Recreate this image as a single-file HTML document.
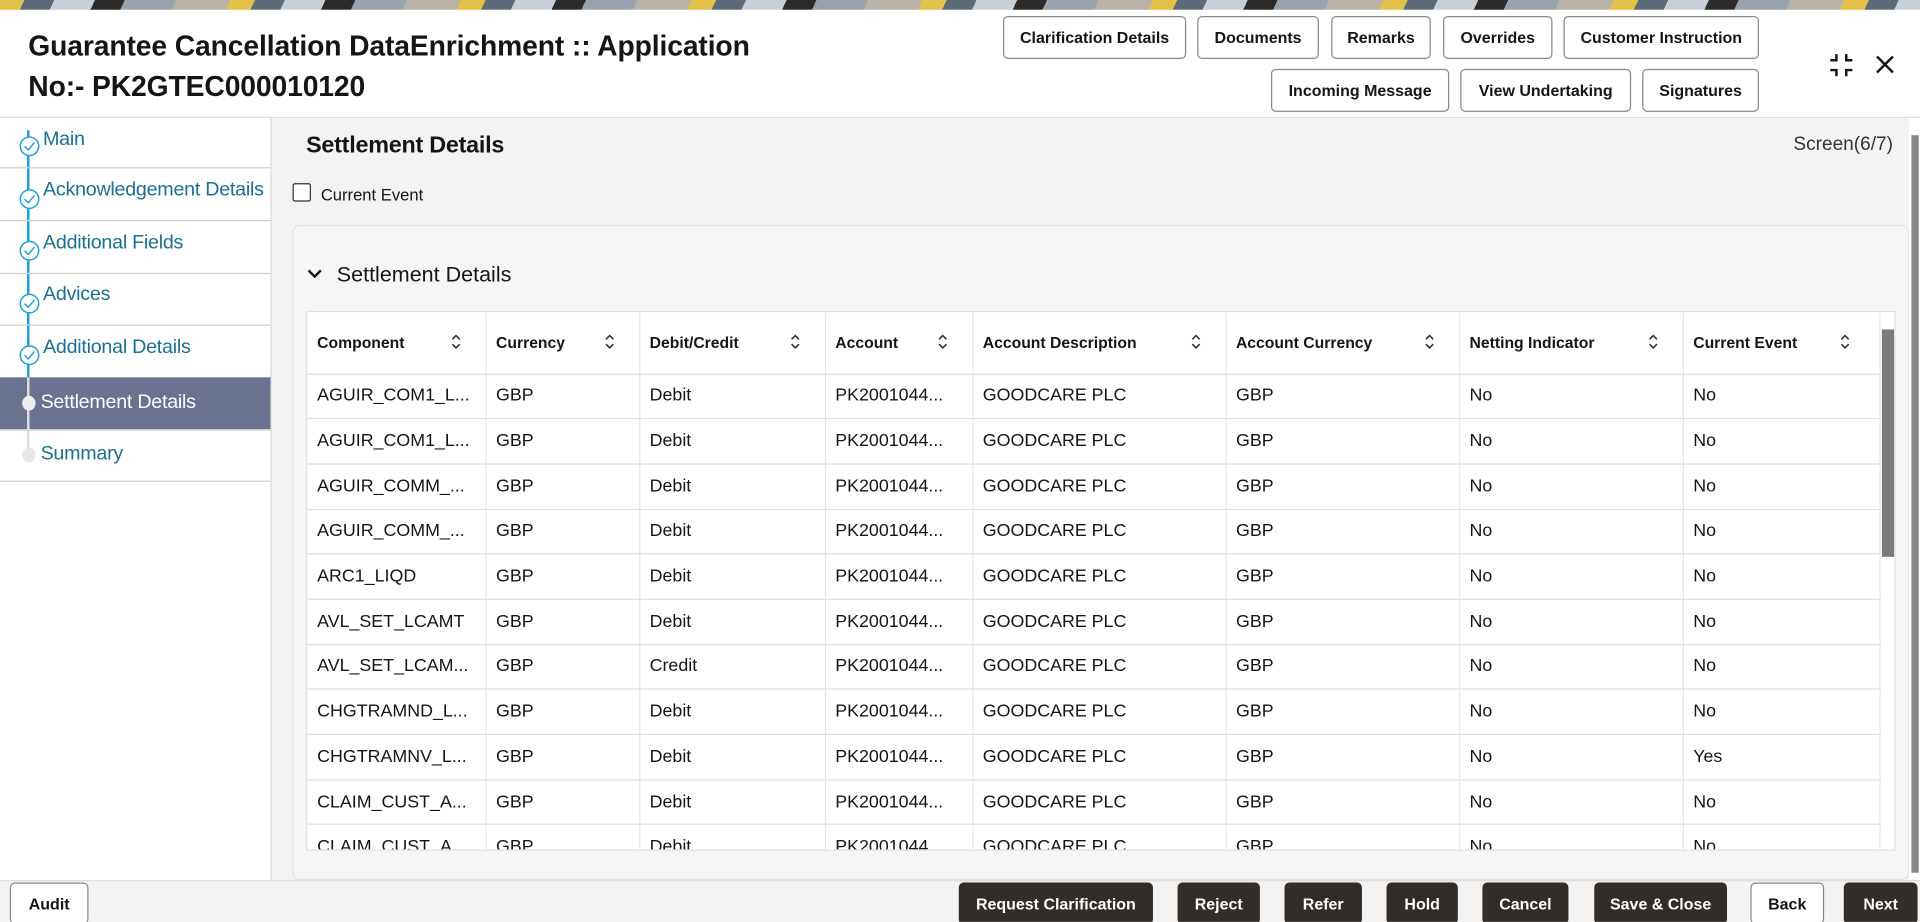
<!DOCTYPE html>
<html><head><meta charset="utf-8"><style>
*{box-sizing:border-box;margin:0;padding:0}
html,body{width:1920px;height:922px;overflow:hidden;background:#fff;font-family:"Liberation Sans",sans-serif;color:#161513}
#w{position:absolute;left:0;top:0;width:1562px;height:750.1px;transform:scale(1.22919);transform-origin:0 0;overflow:hidden}
.a{position:absolute}
.banner{left:0;top:0;width:1562px;height:8px;background:repeating-linear-gradient(115deg,#e2c14a 0 18px,#5d6a78 18px 40px,#c9cfd6 40px 70px,#2d2b2a 70px 92px,#9aa3ad 92px 130px,#b9b2a6 130px 170px)}
.title{left:23px;top:21px;font-size:23px;font-weight:bold;line-height:33px;color:#161513;letter-spacing:-0.1px}
.btn{position:absolute;height:35px;border:1px solid #8a8885;border-radius:4px;background:#fff;font-size:13px;font-weight:bold;display:flex;align-items:center;justify-content:center;color:#161513}
.dk{position:absolute;top:718px;height:34px;background:#312d2a;color:#fff;border-radius:4px;font-size:13px;font-weight:bold;display:flex;align-items:center;justify-content:center}
.side{left:0;top:96px;width:221px;height:620px;background:#fff;border-right:1px solid #d5d3d0}
.it{position:absolute;left:0;width:220px;height:43px;border-bottom:1px solid #cfcdc9;font-size:16px;color:#1a6f94;padding-left:35px;line-height:36px;letter-spacing:-0.2px}
.main{left:221px;top:96px;width:1332px;height:620px;background:#f4f3f1}
table{border-collapse:collapse;font-size:14.5px;width:1279px;table-layout:fixed;background:#fff}
td,th{height:36.7px;border-bottom:1px solid #e1dfdc;border-right:1px solid #e8e6e3;padding-left:8px;white-space:nowrap;overflow:hidden;text-align:left}
th{height:50px;font-size:12.8px;font-weight:bold;position:relative}
th svg{position:absolute;right:20px;top:17px}
</style></head><body><div id="w">
<div class="a banner"></div>
<div class="a" style="left:0;top:8px;width:1562px;height:88px;background:#fff;border-bottom:1px solid #dedcd9"></div>
<div class="a title">Guarantee Cancellation DataEnrichment :: Application<br>No:- PK2GTEC000010120</div>
<div class="btn" style="left:816px;top:13px;width:149px">Clarification Details</div>
<div class="btn" style="left:974px;top:13px;width:99px">Documents</div>
<div class="btn" style="left:1083px;top:13px;width:81px">Remarks</div>
<div class="btn" style="left:1174px;top:13px;width:89px">Overrides</div>
<div class="btn" style="left:1272px;top:13px;width:159px">Customer Instruction</div>
<div class="btn" style="left:1034px;top:56px;width:145px">Incoming Message</div>
<div class="btn" style="left:1188px;top:56px;width:139px">View Undertaking</div>
<div class="btn" style="left:1336px;top:56px;width:95px">Signatures</div>
<svg class="a" style="left:1487px;top:42px" width="22" height="22" viewBox="0 0 22 22" fill="none" stroke="#161513" stroke-width="2"><path d="M7 2v5H2M15 2v5h5M7 20v-5H2M15 20v-5h5"/></svg>
<svg class="a" style="left:1526px;top:45px" width="15" height="15" viewBox="0 0 15 15" stroke="#161513" stroke-width="2"><path d="M1 1l13 13M14 1L1 14"/></svg>

<div class="a side">
<div class="a" style="left:22px;top:10px;width:2px;height:257px;background:#1aa0d8"></div>
<div class="it" style="top:0;height:41px;line-height:36px">Main</div>
<div class="it" style="top:41px">Acknowledgement Details</div>
<div class="it" style="top:84px">Additional Fields</div>
<div class="it" style="top:126px">Advices</div>
<div class="it" style="top:169px">Additional Details</div>
<div class="it" style="top:211px;background:#6a7191;color:#fff;padding-left:33px;line-height:42px">Settlement Details</div>
<div class="it" style="top:253px;padding-left:33px;line-height:42px">Summary</div>
<div class="a" style="left:22px;top:211px;width:2px;height:43px;background:#ddd"></div>
<div class="a" style="left:22px;top:254px;width:2px;height:20px;background:#ddd"></div>
<div class="a" style="left:18px;top:226px;width:11px;height:12px;border-radius:50%;background:#eee"></div>
<div class="a" style="left:18px;top:268px;width:11px;height:12px;border-radius:50%;background:#e6e6e6"></div>
<svg class="a" style="left:15px;top:14px" width="18" height="190" fill="none" stroke="#1aa0d8" stroke-width="1.2">
<g><circle cx="9" cy="9" r="7.5" fill="#fff"/><path d="M5 9l3 3 5-6"/></g>
<g transform="translate(0,43)"><circle cx="9" cy="9" r="7.5" fill="#fff"/><path d="M5 9l3 3 5-6"/></g>
<g transform="translate(0,85)"><circle cx="9" cy="9" r="7.5" fill="#fff"/><path d="M5 9l3 3 5-6"/></g>
<g transform="translate(0,128)"><circle cx="9" cy="9" r="7.5" fill="#fff"/><path d="M5 9l3 3 5-6"/></g>
<g transform="translate(0,170)"><circle cx="9" cy="9" r="7.5" fill="#fff"/><path d="M5 9l3 3 5-6"/></g>
</svg>
</div>

<div class="a main"></div>
<div class="a" style="left:249px;top:108px;font-size:19px;font-weight:bold;letter-spacing:-0.2px">Settlement Details</div>
<div class="a" style="left:1459px;top:109px;font-size:15.5px;color:#333">Screen(6/7)</div>
<div class="a" style="left:238px;top:149px;width:15px;height:15px;border:1.5px solid #333;border-radius:2px;background:#fff"></div>
<div class="a" style="left:261px;top:151px;font-size:13.5px">Current Event</div>
<div class="a" style="left:238px;top:183px;width:1315px;height:533px;background:#f7f6f4;border:1px solid #e6e4e1;border-radius:6px"></div>
<svg class="a" style="left:250px;top:218px" width="12" height="10" fill="none" stroke="#161513" stroke-width="2"><path d="M1 2l5 5 5-5"/></svg>
<div class="a" style="left:274px;top:213px;font-size:17.5px">Settlement Details</div>

<div class="a" style="left:249px;top:253px;width:1293px;height:439px;overflow:hidden;background:#fff;border:1px solid #e1dfdc">
<table>
<colgroup><col style="width:145px"><col style="width:125px"><col style="width:151px"><col style="width:120px"><col style="width:206px"><col style="width:190px"><col style="width:182px"><col style="width:160px"></colgroup>
<tr><th>Component<svg width="8" height="14" fill="none" stroke="#333" stroke-width="1.3"><path d="M1 5l3-3 3 3M1 9l3 3 3-3"/></svg></th><th>Currency<svg width="8" height="14" fill="none" stroke="#333" stroke-width="1.3"><path d="M1 5l3-3 3 3M1 9l3 3 3-3"/></svg></th><th>Debit/Credit<svg width="8" height="14" fill="none" stroke="#333" stroke-width="1.3"><path d="M1 5l3-3 3 3M1 9l3 3 3-3"/></svg></th><th>Account<svg width="8" height="14" fill="none" stroke="#333" stroke-width="1.3"><path d="M1 5l3-3 3 3M1 9l3 3 3-3"/></svg></th><th>Account Description<svg width="8" height="14" fill="none" stroke="#333" stroke-width="1.3"><path d="M1 5l3-3 3 3M1 9l3 3 3-3"/></svg></th><th>Account Currency<svg width="8" height="14" fill="none" stroke="#333" stroke-width="1.3"><path d="M1 5l3-3 3 3M1 9l3 3 3-3"/></svg></th><th>Netting Indicator<svg width="8" height="14" fill="none" stroke="#333" stroke-width="1.3"><path d="M1 5l3-3 3 3M1 9l3 3 3-3"/></svg></th><th>Current Event<svg style="right:24px" width="8" height="14" fill="none" stroke="#333" stroke-width="1.3"><path d="M1 5l3-3 3 3M1 9l3 3 3-3"/></svg></th></tr>
<tr><td>AGUIR_COM1_L...</td><td>GBP</td><td>Debit</td><td>PK2001044...</td><td>GOODCARE PLC</td><td>GBP</td><td>No</td><td>No</td></tr>
<tr><td>AGUIR_COM1_L...</td><td>GBP</td><td>Debit</td><td>PK2001044...</td><td>GOODCARE PLC</td><td>GBP</td><td>No</td><td>No</td></tr>
<tr><td>AGUIR_COMM_...</td><td>GBP</td><td>Debit</td><td>PK2001044...</td><td>GOODCARE PLC</td><td>GBP</td><td>No</td><td>No</td></tr>
<tr><td>AGUIR_COMM_...</td><td>GBP</td><td>Debit</td><td>PK2001044...</td><td>GOODCARE PLC</td><td>GBP</td><td>No</td><td>No</td></tr>
<tr><td>ARC1_LIQD</td><td>GBP</td><td>Debit</td><td>PK2001044...</td><td>GOODCARE PLC</td><td>GBP</td><td>No</td><td>No</td></tr>
<tr><td>AVL_SET_LCAMT</td><td>GBP</td><td>Debit</td><td>PK2001044...</td><td>GOODCARE PLC</td><td>GBP</td><td>No</td><td>No</td></tr>
<tr><td>AVL_SET_LCAM...</td><td>GBP</td><td>Credit</td><td>PK2001044...</td><td>GOODCARE PLC</td><td>GBP</td><td>No</td><td>No</td></tr>
<tr><td>CHGTRAMND_L...</td><td>GBP</td><td>Debit</td><td>PK2001044...</td><td>GOODCARE PLC</td><td>GBP</td><td>No</td><td>No</td></tr>
<tr><td>CHGTRAMNV_L...</td><td>GBP</td><td>Debit</td><td>PK2001044...</td><td>GOODCARE PLC</td><td>GBP</td><td>No</td><td>Yes</td></tr>
<tr><td>CLAIM_CUST_A...</td><td>GBP</td><td>Debit</td><td>PK2001044...</td><td>GOODCARE PLC</td><td>GBP</td><td>No</td><td>No</td></tr>
<tr><td>CLAIM_CUST_A...</td><td>GBP</td><td>Debit</td><td>PK2001044...</td><td>GOODCARE PLC</td><td>GBP</td><td>No</td><td>No</td></tr>
</table>
<div class="a" style="left:1280px;top:0;width:13px;height:439px;background:#fff"></div>
<div class="a" style="left:1281px;top:14px;width:10px;height:185px;background:#7d7b79"></div>
</div>

<div class="a" style="left:1553px;top:96px;width:9px;height:620px;background:#fff"></div>
<div class="a" style="left:1555px;top:110px;width:6px;height:600px;background:#8a8886"></div>

<div class="a" style="left:0;top:716px;width:1562px;height:37px;background:#f4f3f1;border-top:1px solid #e0dedb"></div>
<div class="btn" style="left:8px;top:718px;width:64px;height:34px">Audit</div>
<div class="dk" style="left:780px;width:158px">Request Clarification</div>
<div class="dk" style="left:958px;width:67px">Reject</div>
<div class="dk" style="left:1045px;width:63px">Refer</div>
<div class="dk" style="left:1128px;width:58px">Hold</div>
<div class="dk" style="left:1206px;width:70px">Cancel</div>
<div class="dk" style="left:1297px;width:108px">Save &amp; Close</div>
<div class="btn" style="left:1424px;top:718px;width:60px;height:34px">Back</div>
<div class="dk" style="left:1500px;width:60px">Next</div>
</div></body></html>
